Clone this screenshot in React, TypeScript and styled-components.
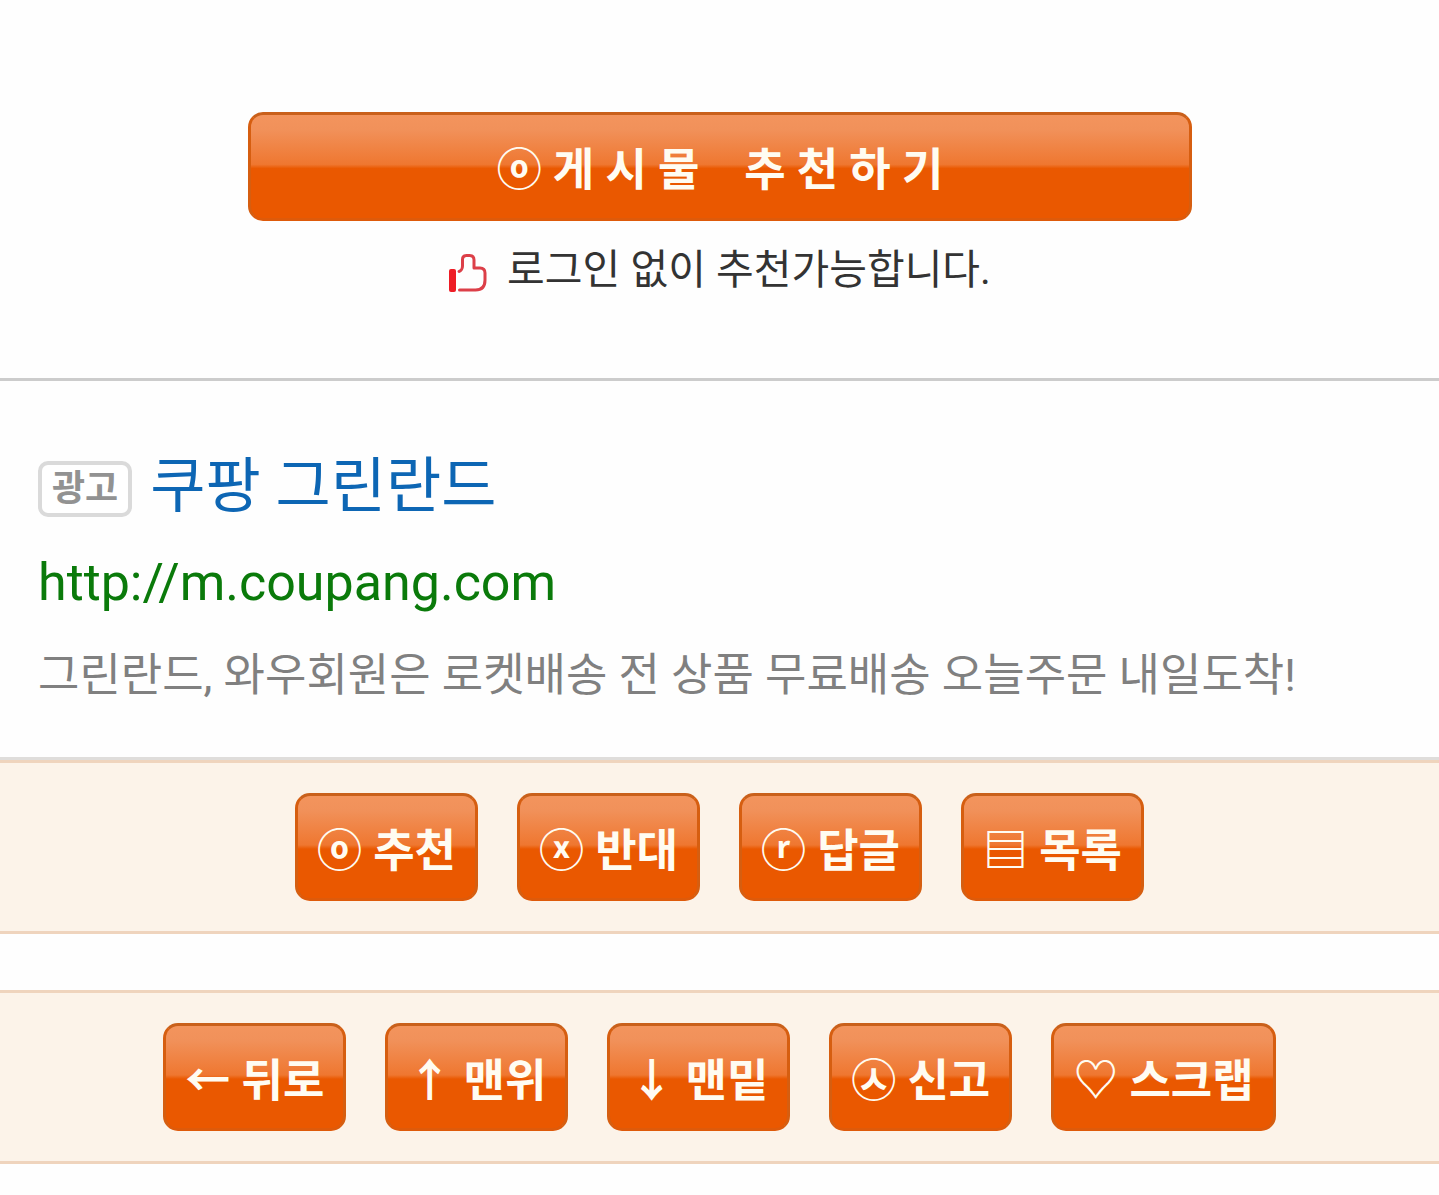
import React from 'react';
import styled, { createGlobalStyle, css } from 'styled-components';

const GlobalStyle = createGlobalStyle`
  * { box-sizing: border-box; }
  body {
    margin: 0;
    background: #fefefe;
    font-family: Roboto, "Noto Sans CJK KR", sans-serif;
    color: #333;
  }
  a { color: inherit; text-decoration: none; }
`;

const Recommend = styled.section`
  display: flex;
  flex-direction: column;
  gap: 17px;
  padding: 112px 247px 76px 248px;
`;

const GlossyButton = styled.button<{ $wide?: boolean }>`
  padding: 26px 19px 16px;
  border: 3px solid;
  border-color: #c9601b #d65e10 #de5a0a;
  border-radius: 15px;
  background: linear-gradient(#f3945d 0%, #f1915a 14%, #ef7730 48%, #ea5800 52%, #ea5800 100%) padding-box;
  background-color: #ea5800;
  background-clip: border-box;
  color: #fffcf2;
  font-family: inherit;
  font-size: 45px;
  font-weight: 700;
  line-height: 60px;
  text-align: center;
  white-space: pre;
  cursor: pointer;
  ${({ $wide }) => $wide && css`
    width: 100%;
    padding-bottom: 17px;
  `}
`;

const Hint = styled.p`
  display: flex;
  align-items: center;
  justify-content: center;
  gap: 20px;
  margin: 0;
  color: #333;
  font-size: 41px;
  line-height: 64px;
  white-space: nowrap;

  svg { flex: none; margin-top: 6px; }
`;

const Ad = styled.article`
  padding: 68px 38px 45px;
  border-top: 3px solid #ccc;
  border-bottom: 3px solid #dfdddb;
`;

const AdTitle = styled.h2`
  display: flex;
  align-items: center;
  gap: 18px;
  margin: 0;
  color: #0d66b4;
  font-size: 60px;
  font-weight: 400;
  line-height: 76px;
`;

const AdBadge = styled.span`
  margin-top: 4px;
  padding: 0 10px;
  border: 4px solid #dadada;
  border-radius: 10px;
  background: #fff;
  color: #929292;
  font-size: 36px;
  font-weight: 700;
  line-height: 48px;
`;

const AdUrl = styled.a`
  display: block;
  margin-top: 22px;
  color: #0a7a0a;
  font-size: 52px;
  line-height: 72px;
`;

const AdText = styled.p`
  margin: 21px 0 0;
  color: #808080;
  font-size: 45px;
  line-height: 72px;
`;

const Toolbar = styled.nav`
  display: flex;
  flex-wrap: wrap;
  justify-content: center;
  gap: 39px;
  padding: 30px 0;
  border: solid #efd4bd;
  border-width: 3px 0;
  background: #fcf3e9;

  & + & { margin-top: 56px; }
`;

const ThumbIcon = () => (
  <svg width="38" height="38" viewBox="0 0 38 38" aria-hidden="true">
    <rect x="0" y="15" width="7" height="23" rx="2" fill="#ee1c25" />
    <path
      d="M10 17.500C12 17 13.500 14.500 13.500 12V5.500C13.500 2.500 15 1.500 17.500 1.500H20.500C23.500 1.500 25 3 25 6V14H31C34.500 14 36 15.500 36 19V26C36 32.500 32.500 36 26.500 36H10.500"
      fill="none"
      stroke="#dc3f48"
      strokeWidth="3"
      strokeLinejoin="round"
      strokeLinecap="round"
    />
  </svg>
);

const postActions = ['ⓞ 추천', 'ⓧ 반대', 'ⓡ 답글', '▤ 목록'];
const pageActions = ['← 뒤로', '↑ 맨위', '↓ 맨밑', '㉦ 신고', '♡ 스크랩'];

const ActionBar = ({ label, actions }: { label: string; actions: string[] }) => (
  <Toolbar aria-label={label}>
    {actions.map((action) => (
      <GlossyButton key={action} type="button">{action}</GlossyButton>
    ))}
  </Toolbar>
);

export default function App() {
  return (
    <>
      <GlobalStyle />
      <main>
        <Recommend>
          <GlossyButton type="button" $wide>
            {'ⓞ 게 시 물 \u00a0\u00a0 추 천 하 기'}
          </GlossyButton>
          <Hint>
            <ThumbIcon />
            로그인 없이 추천가능합니다.
          </Hint>
        </Recommend>
        <Ad>
          <AdTitle>
            <AdBadge>광고</AdBadge>
            <a href="#ad">쿠팡 그린란드</a>
          </AdTitle>
          <AdUrl href="#ad">http://m.coupang.com</AdUrl>
          <AdText>그린란드, 와우회원은 로켓배송 전 상품 무료배송 오늘주문 내일도착!</AdText>
        </Ad>
        <ActionBar label="게시물" actions={postActions} />
        <ActionBar label="페이지" actions={pageActions} />
      </main>
    </>
  );
}
